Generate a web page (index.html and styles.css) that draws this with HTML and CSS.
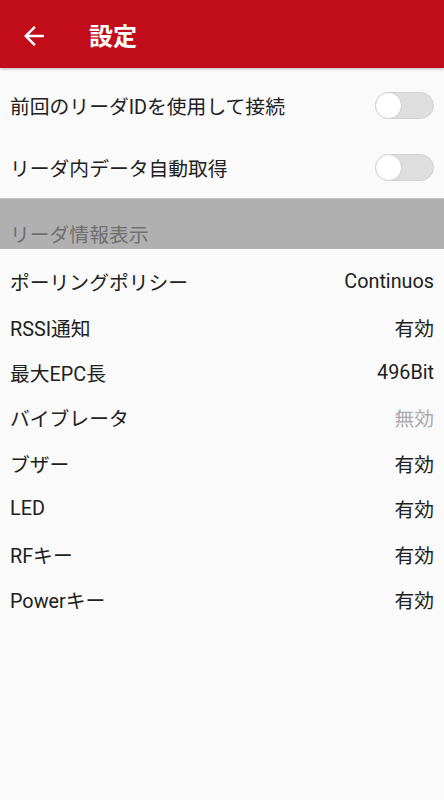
FILE: index.html
```html
<!DOCTYPE html>
<html lang="ja">
<head>
    <meta charset="UTF-8">
    <title>設定</title>
    <link rel="stylesheet" href="styles.css">
</head>
<body>
    <header class="app-bar">
        <svg class="back" width="30" height="30" viewBox="0 0 24 24">
            <path d="M20 11H7.83l5.59-5.59L12 4l-8 8 8 8 1.41-1.41L7.83 13H20v-2z" fill="#fff"/>
        </svg>
        <h1>設定</h1>
    </header>

    <div class="toggle-list">
        <div class="row toggle-row">
            <span>前回のリーダIDを使用して接続</span>
            <span class="switch"><span class="thumb"></span></span>
        </div>
        <div class="row toggle-row">
            <span>リーダ内データ自動取得</span>
            <span class="switch"><span class="thumb"></span></span>
        </div>
    </div>

    <div class="section">リーダ情報表示</div>

    <div class="info-list">
        <div class="row info-row"><span>ポーリングポリシー</span><span>Continuos</span></div>
        <div class="row info-row"><span>RSSI通知</span><span>有効</span></div>
        <div class="row info-row"><span>最大EPC長</span><span>496Bit</span></div>
        <div class="row info-row"><span>バイブレータ</span><span class="off">無効</span></div>
        <div class="row info-row"><span>ブザー</span><span>有効</span></div>
        <div class="row info-row"><span>LED</span><span>有効</span></div>
        <div class="row info-row"><span>RFキー</span><span>有効</span></div>
        <div class="row info-row"><span>Powerキー</span><span>有効</span></div>
    </div>
</body>
</html>
```

FILE: styles.css
```css
body {
    margin: 0;
    background-color: #fafafa;
    font-family: Roboto, "Noto Sans CJK JP", sans-serif;
    font-size: 19.8px;
    color: #212121;
}
.app-bar {
    display: flex;
    align-items: center;
    height: 68px;
    background-color: #c10c19;
    box-shadow: 0 1px 3px rgba(0,0,0,0.25);
    position: relative;
}
.back {
    margin-left: 19px;
    margin-top: 3px;
}
.app-bar h1 {
    margin: 0 0 0 40px;
    color: #fff;
    font-size: 24px;
    font-weight: bold;
}
.toggle-list {
    padding-top: 6px;
}
.row {
    display: flex;
    align-items: center;
    justify-content: space-between;
    padding: 0 10px;
}
.toggle-row {
    height: 62px;
}
.switch {
    position: relative;
    width: 57px;
    height: 25px;
    border-radius: 14px;
    background-color: #dedede;
    border: 1px solid #d2d2d2;
}
.thumb {
    position: absolute;
    left: -1px;
    top: -1px;
    width: 25px;
    height: 25px;
    border-radius: 50%;
    background-color: #fff;
    border: 1px solid #d0d0d0;
}
.section {
    height: 51px;
    box-sizing: border-box;
    padding: 0 10px 1px;
    display: flex;
    align-items: flex-end;
    background-color: #b0b0b0;
    border-top: 1px solid #c4c4c4;
    color: #6f6f6f;
}
.info-list {
    padding-top: 10px;
}
.info-row {
    height: 45.4px;
}
.off {
    color: #ababab;
}
```
